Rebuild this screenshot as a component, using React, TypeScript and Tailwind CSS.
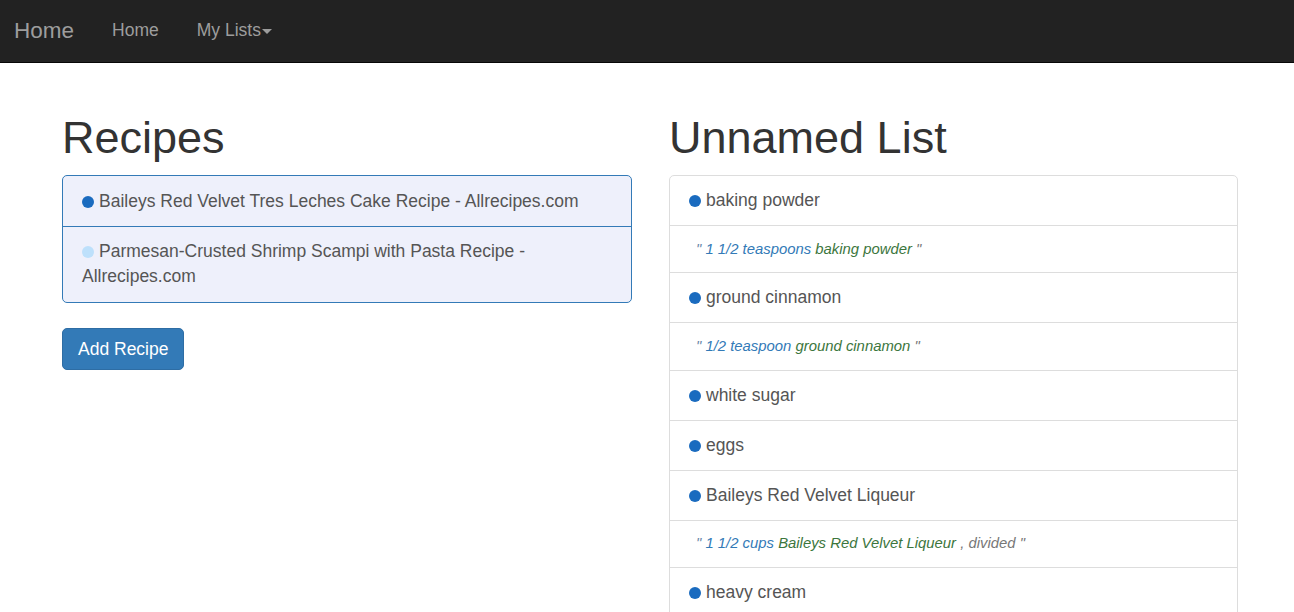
const recipes = [
  { title: "Baileys Red Velvet Tres Leches Cake Recipe - Allrecipes.com", active: true },
  { title: "Parmesan-Crusted Shrimp Scampi with Pasta Recipe - Allrecipes.com", active: false },
];

type Row =
  | { kind: "item"; name: string }
  | { kind: "note"; amount: string; name: string; extra?: string };

const rows: Row[] = [
  { kind: "item", name: "baking powder" },
  { kind: "note", amount: "1 1/2 teaspoons", name: "baking powder" },
  { kind: "item", name: "ground cinnamon" },
  { kind: "note", amount: "1/2 teaspoon", name: "ground cinnamon" },
  { kind: "item", name: "white sugar" },
  { kind: "item", name: "eggs" },
  { kind: "item", name: "Baileys Red Velvet Liqueur" },
  { kind: "note", amount: "1 1/2 cups", name: "Baileys Red Velvet Liqueur", extra: ", divided" },
  { kind: "item", name: "heavy cream" },
];

function Dot({ light }: { light?: boolean }) {
  return (
    <span
      className={`mr-[5px] inline-block h-[12px] w-[12px] rounded-full align-[-1px] ${
        light ? "bg-[#bde0fb]" : "bg-[#1a6bbf]"
      }`}
    />
  );
}

export default function App() {
  return (
    <div className="min-h-[612px] bg-white font-['Liberation_Sans',Arial,sans-serif] text-[17.5px] leading-[25px] text-[#555]">
      <nav className="flex h-[63px] items-center border-b border-[#080808] bg-[#222] pb-[2px]">
        <span className="ml-[14px] text-[22.5px] text-[#9d9d9d]">Home</span>
        <span className="ml-[38px] text-[17.5px] text-[#9d9d9d]">Home</span>
        <span className="ml-[38px] flex items-center text-[17.5px] text-[#9d9d9d]">
          My Lists
          <span className="ml-[1px] mt-[2px] h-0 w-0 border-x-[5px] border-t-[5px] border-x-transparent border-t-[#9d9d9d]" />
        </span>
      </nav>

      <div className="ml-[62px] mt-[25px] flex gap-[37px]">
        <div className="w-[570px] shrink-0">
          <h1 className="mb-[12.5px] mt-[25px] text-[45px] leading-[49.5px] text-[#333]">Recipes</h1>
          <div className="overflow-hidden rounded-[5px] border border-[#337ab7] bg-[#eef0fb]">
            {recipes.map((r, i) => (
              <div
                key={r.title}
                className={`px-[19px] ${i > 0 ? "border-t border-[#337ab7] pb-[13.5px] pt-[12px]" : "pb-[12px] pt-[12.5px]"}`}
              >
                <Dot light={!r.active} />
                {r.title}
              </div>
            ))}
          </div>
          <button className="mt-[25px] rounded-[5px] border border-[#2e6da4] bg-[#337ab7] px-[15px] py-[7.5px] text-[17.5px] leading-[25px] text-white">
            Add Recipe
          </button>
        </div>

        <div className="w-[569px] shrink-0">
          <h1 className="mb-[12.5px] mt-[25px] text-[45px] leading-[49.5px] text-[#333]">Unnamed List</h1>
          <div className="rounded-t-[5px] border border-[#ddd]">
            {rows.map((row, i) => (
              <div
                key={i}
                className={`px-[19px] ${row.kind === "item" ? "pb-[12px] pt-[12px]" : "py-[12.5px]"} ${
                  i > 0 ? "border-t border-[#ddd]" : ""
                }`}
              >
                {row.kind === "item" ? (
                  <>
                    <Dot />
                    {row.name}
                  </>
                ) : (
                  <div className="pl-[7px] text-[14.875px] italic leading-[21.25px] text-[#777]">
                    <span className="text-[#6b87a8]">" </span>
                    <span className="text-[#337ab7]">{row.amount}</span>{" "}
                    <span className="text-[#3c763d]">{row.name}</span>
                    {row.extra ? <span> {row.extra}</span> : null}
                    <span> "</span>
                  </div>
                )}
              </div>
            ))}
          </div>
        </div>
      </div>
    </div>
  );
}
